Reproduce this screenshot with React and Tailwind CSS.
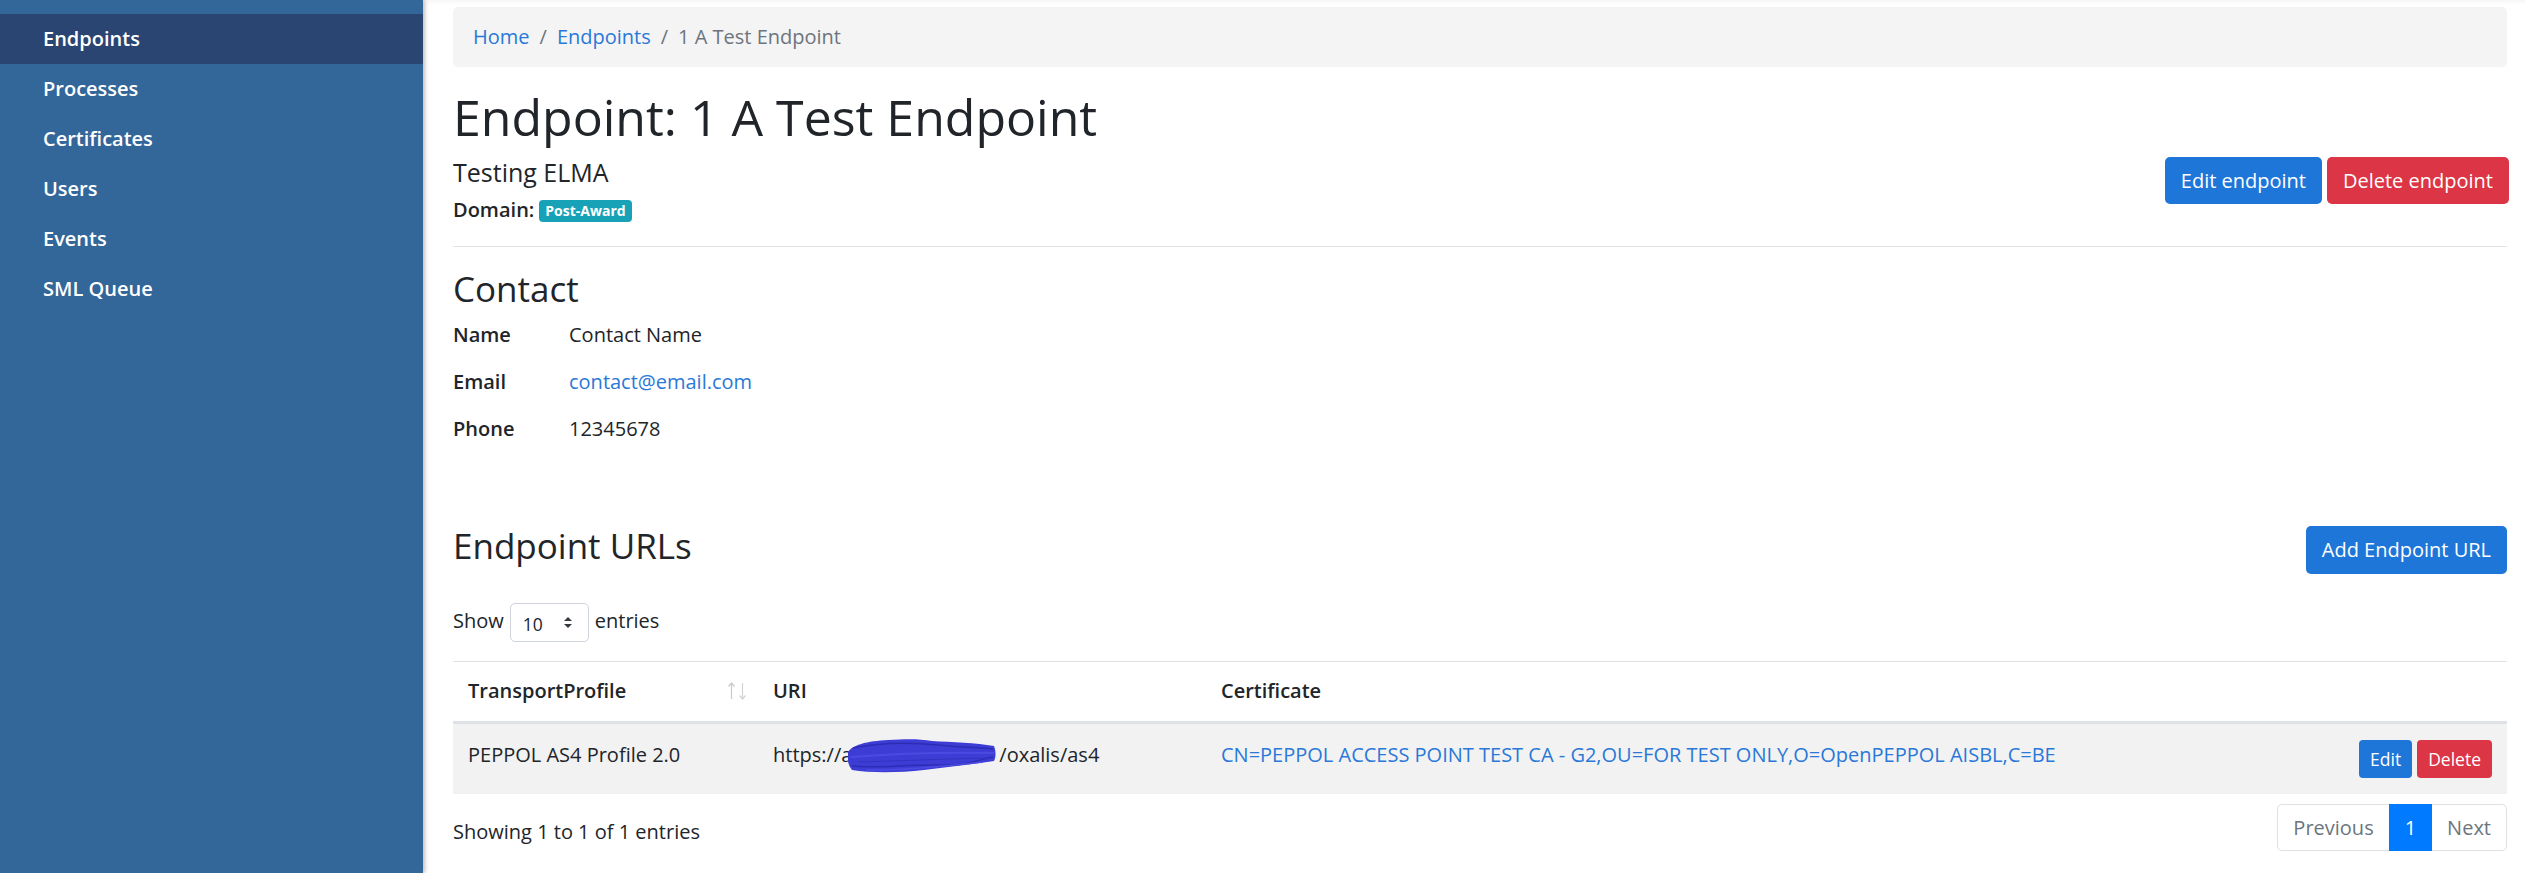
import React from 'react';

const menu = ['Endpoints', 'Processes', 'Certificates', 'Users', 'Events', 'SML Queue'];

function SortIcon() {
    return (
        <svg width="20" height="18" viewBox="0 0 20 18" className="shrink-0 mt-[6px]">
            <path d="M3.5 17 L3.5 1.5 M0.5 4.5 L3.5 1 L6.5 4.5" stroke="#c9c9c9" strokeWidth="1.2" fill="none" />
            <path d="M14.5 1 L14.5 16.5 M11.5 13.5 L14.5 17 L17.5 13.5" stroke="#d4d4d4" strokeWidth="1.2" fill="none" />
        </svg>
    );
}

function SelectArrows() {
    return (
        <svg width="10" height="13" viewBox="0 0 10 13">
            <path d="M1 5 L5 1 L9 5 Z" fill="#343a40" />
            <path d="M1 8 L5 12 L9 8 Z" fill="#343a40" />
        </svg>
    );
}

// the redacted part of the URL
function Scribble() {
    return (
        <svg width="148" height="34" viewBox="0 0 148 34" className="inline-block align-middle -ml-[4px] -mt-[2px]">
            <path d="M0 14 C 2 6, 20 2, 40 1 C 60 0, 72 0, 84 2 C 104 3, 128 4, 146 7 C 148 12, 148 18, 146 22 C 126 25, 100 28, 76 31 C 50 34, 22 34, 4 31 C 0 26, -1 20, 0 14 Z" fill="#3d3dd6" />
            <path d="M4 27 C 30 30, 60 25, 90 26 S 128 21, 145 18" stroke="#2c2cb4" strokeWidth="1.5" fill="none" />
            <path d="M5 9 C 30 4, 60 3, 90 6 S 128 8, 145 10" stroke="#2c2cb4" strokeWidth="1.5" fill="none" />
            <path d="M3 18 C 40 15, 80 13, 146 14" stroke="#4b4be2" strokeWidth="2" fill="none" />
            <path d="M10 23 C 50 22, 90 20, 142 19" stroke="#3232c0" strokeWidth="1" fill="none" />
            <path d="M18 31 C 50 32, 90 28, 135 23" stroke="#4b4be2" strokeWidth="1.5" fill="none" />
        </svg>
    );
}

export default function App() {
    return (
        <div className="flex min-h-[873px] font-['Open_Sans','Liberation_Sans',sans-serif] text-[20px] leading-[30px] text-[#212529] bg-white">
            {/* Sidebar */}
            <aside className="w-[423px] shrink-0 bg-[#336699] pt-[14px] shadow-[2px_0_4px_rgba(0,0,0,0.25)] z-10">
                {menu.map((item, i) => (
                    <div
                        key={item}
                        className={`h-[50px] flex items-center pl-[43px] text-white font-semibold text-[20px] ${i === 0 ? 'bg-[#2a4572]' : ''}`}
                    >
                        {item}
                    </div>
                ))}
            </aside>

            {/* Main */}
            <main className="flex-1 pl-[30px] pr-[18px] pt-[7px] shadow-[inset_0_6px_6px_-6px_rgba(0,0,0,0.08)]">
                <nav className="bg-[#f4f4f4] rounded-[5px] px-[20px] py-[15px] flex text-[20px]">
                    <a className="text-[#2a78d8]">Home</a>
                    <span className="px-[10px] text-[#6c757d]">/</span>
                    <a className="text-[#2a78d8]">Endpoints</a>
                    <span className="px-[10px] text-[#6c757d]">/</span>
                    <span className="text-[#6c757d]">1 A Test Endpoint</span>
                </nav>

                {/* Header */}
                <div className="flex justify-between mt-[20px]">
                    <div>
                        <h1 className="text-[50px] leading-[60px] font-normal mb-[10px]">Endpoint: 1 A Test Endpoint</h1>
                        <h5 className="text-[25px] leading-[30px] mb-[8px]">Testing ELMA</h5>
                        <div className="flex items-center">
                            <span className="font-semibold">Domain:</span>
                            <span className="ml-[5px] bg-[#17a2b8] text-white text-[14px] leading-[14px] font-bold rounded-[4px] px-[6px] py-[4px] mt-[1px]">Post-Award</span>
                        </div>
                    </div>
                    <div className="flex gap-[5px] mt-[70px] mr-[-2px]">
                        <button className="h-[47px] px-[16px] rounded-[5px] bg-[#1e76d9] text-white">Edit endpoint</button>
                        <button className="h-[47px] px-[16px] rounded-[5px] bg-[#dc3545] text-white">Delete endpoint</button>
                    </div>
                </div>

                <hr className="mt-[21px] mb-[21px] border-t border-[#e3e3e3]" />

                {/* Contact */}
                <h3 className="text-[35px] leading-[42px] mb-[10px]">Contact</h3>
                <div className="flex flex-col">
                    <div className="h-[47px] flex">
                        <span className="w-[116px] font-semibold">Name</span>
                        <span>Contact Name</span>
                    </div>
                    <div className="h-[47px] flex">
                        <span className="w-[116px] font-semibold">Email</span>
                        <a className="text-[#2a78d8]">contact@email.com</a>
                    </div>
                    <div className="h-[47px] flex">
                        <span className="w-[116px] font-semibold">Phone</span>
                        <span>12345678</span>
                    </div>
                </div>

                {/* Endpoint URLs */}
                <div className="flex justify-between items-start mt-[64px]">
                    <h3 className="text-[35px] leading-[42px]">Endpoint URLs</h3>
                    <button className="h-[48px] px-[16px] rounded-[5px] bg-[#1e76d9] text-white mt-[1px]">Add Endpoint URL</button>
                </div>

                <div className="flex items-center gap-[6px] mt-[29px] h-[39px]">
                    <span className="mt-[-3px]">Show</span>
                    <div className="w-[79px] h-[39px] border border-[#ced4da] rounded-[5px] flex items-center justify-between pl-[12px] pr-[15px] text-[17.5px]">
                        <span className="mt-[3px]">10</span>
                        <SelectArrows />
                    </div>
                    <span className="mt-[-3px]">entries</span>
                </div>

                <table className="w-full table-fixed border-collapse mt-[19px]">
                    <colgroup>
                        <col className="w-[305px]" />
                        <col className="w-[448px]" />
                        <col />
                        <col className="w-[209px]" />
                    </colgroup>
                    <thead>
                        <tr className="border-t border-[#dee2e6] border-b-[3px] border-b-[#dee2e6]">
                            <th className="text-left font-semibold pl-[15px] pr-[10px] pt-[14px] pb-[15px] align-top">
                                <div className="flex justify-between">
                                    <span>TransportProfile</span>
                                    <SortIcon />
                                </div>
                            </th>
                            <th className="text-left font-semibold px-[15px] pt-[14px] pb-[15px] align-top">URI</th>
                            <th className="text-left font-semibold px-[15px] pt-[14px] pb-[15px] align-top">Certificate</th>
                            <th className="px-[15px]"></th>
                        </tr>
                    </thead>
                    <tbody>
                        <tr className="bg-[#f2f2f2]">
                            <td className="px-[15px] py-[16px] align-top">PEPPOL AS4 Profile 2.0</td>
                            <td className="px-[15px] py-[16px] align-top whitespace-nowrap">
                                https://a<Scribble /><span className="ml-[3px]">/oxalis/as4</span>
                            </td>
                            <td className="px-[15px] py-[16px] align-top whitespace-nowrap">
                                <a className="text-[#2a78d8]">CN=PEPPOL ACCESS POINT TEST CA - G2,OU=FOR TEST ONLY,O=OpenPEPPOL AISBL,C=BE</a>
                            </td>
                            <td className="px-[15px] py-[16px] align-top">
                                <div className="flex justify-end gap-[5px]">
                                    <button className="h-[38px] px-[11px] rounded-[4px] bg-[#1e76d9] text-white text-[17.5px]">Edit</button>
                                    <button className="h-[38px] px-[11px] rounded-[4px] bg-[#dc3545] text-white text-[17.5px]">Delete</button>
                                </div>
                            </td>
                        </tr>
                    </tbody>
                </table>

                {/* Footer of table */}
                <div className="flex justify-between items-start mt-[10px]">
                    <div className="mt-[13px]">Showing 1 to 1 of 1 entries</div>
                    <div className="flex h-[47px] border border-[#dee2e6] rounded-[5px] text-[#6c757d]">
                        <span className="px-[15px] flex items-center">Previous</span>
                        <span className="px-[16px] flex items-center bg-[#007bff] text-white -my-px">1</span>
                        <span className="px-[15px] flex items-center">Next</span>
                    </div>
                </div>
            </main>
        </div>
    );
}
